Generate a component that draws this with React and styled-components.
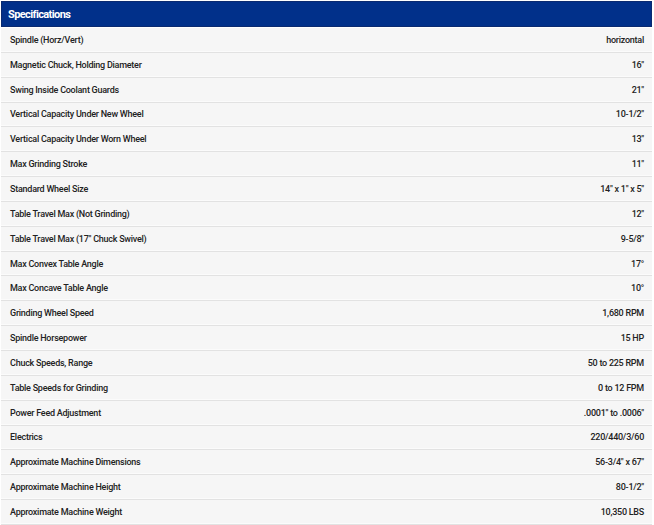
import React from "react";
import styled, { createGlobalStyle } from "styled-components";

const Global = createGlobalStyle`
  html, body { margin: 0; padding: 0; background: #ffffff; }
  body { font-family: Roboto, "Liberation Sans", sans-serif; }
`;

const Wrap = styled.div`
  width: 654px;
  padding: 1px 2px 0 1px;
  box-sizing: border-box;
`;

const Header = styled.div`
  height: 26px;
  background: #01308a;
  color: #ffffff;
  font-weight: 700;
  font-size: 11px;
  display: flex;
  align-items: center;
  padding-left: 6px;
  letter-spacing: -0.6px;
  border: 1px solid #0a2a70;
  box-sizing: border-box;
`;

const Table = styled.div`
  display: flex;
  flex-direction: column;
  margin-top: 1px;
`;

const Row = styled.div`
  height: 24.85px;
  box-sizing: border-box;
  background: #f6f6f6;
  border-bottom: 1px solid #e2e2e2;
  box-shadow: inset 0 -1px 0 #fbfbfb;
  display: flex;
  align-items: center;
  justify-content: space-between;
  padding: 0 8px 0 9px;
  font-size: 9px;
  font-weight: 500;
  letter-spacing: -0.25px;
  color: #222;
`;

const Label = styled.span``;
const Value = styled.span``;

const data = [
  ["Spindle (Horz/Vert)", "horizontal"],
  ["Magnetic Chuck, Holding Diameter", "16\""],
  ["Swing Inside Coolant Guards", "21\""],
  ["Vertical Capacity Under New Wheel", "10-1/2\""],
  ["Vertical Capacity Under Worn Wheel", "13\""],
  ["Max Grinding Stroke", "11\""],
  ["Standard Wheel Size", "14\" x 1\" x 5\""],
  ["Table Travel Max (Not Grinding)", "12\""],
  ["Table Travel Max (17\" Chuck Swivel)", "9-5/8\""],
  ["Max Convex Table Angle", "17°"],
  ["Max Concave Table Angle", "10°"],
  ["Grinding Wheel Speed", "1,680 RPM"],
  ["Spindle Horsepower", "15 HP"],
  ["Chuck Speeds, Range", "50 to 225 RPM"],
  ["Table Speeds for Grinding", "0 to 12 FPM"],
  ["Power Feed Adjustment", ".0001\" to .0006\""],
  ["Electrics", "220/440/3/60"],
  ["Approximate Machine Dimensions", "56-3/4\" x 67\""],
  ["Approximate Machine Height", "80-1/2\""],
  ["Approximate Machine Weight", "10,350 LBS"],
];

export default function App() {
  return (
    <Wrap>
      <Global />
      <Header>Specifications</Header>
      <Table>
        {data.map(([k, v]) => (
          <Row key={k}>
            <Label>{k}</Label>
            <Value>{v}</Value>
          </Row>
        ))}
      </Table>
    </Wrap>
  );
}
